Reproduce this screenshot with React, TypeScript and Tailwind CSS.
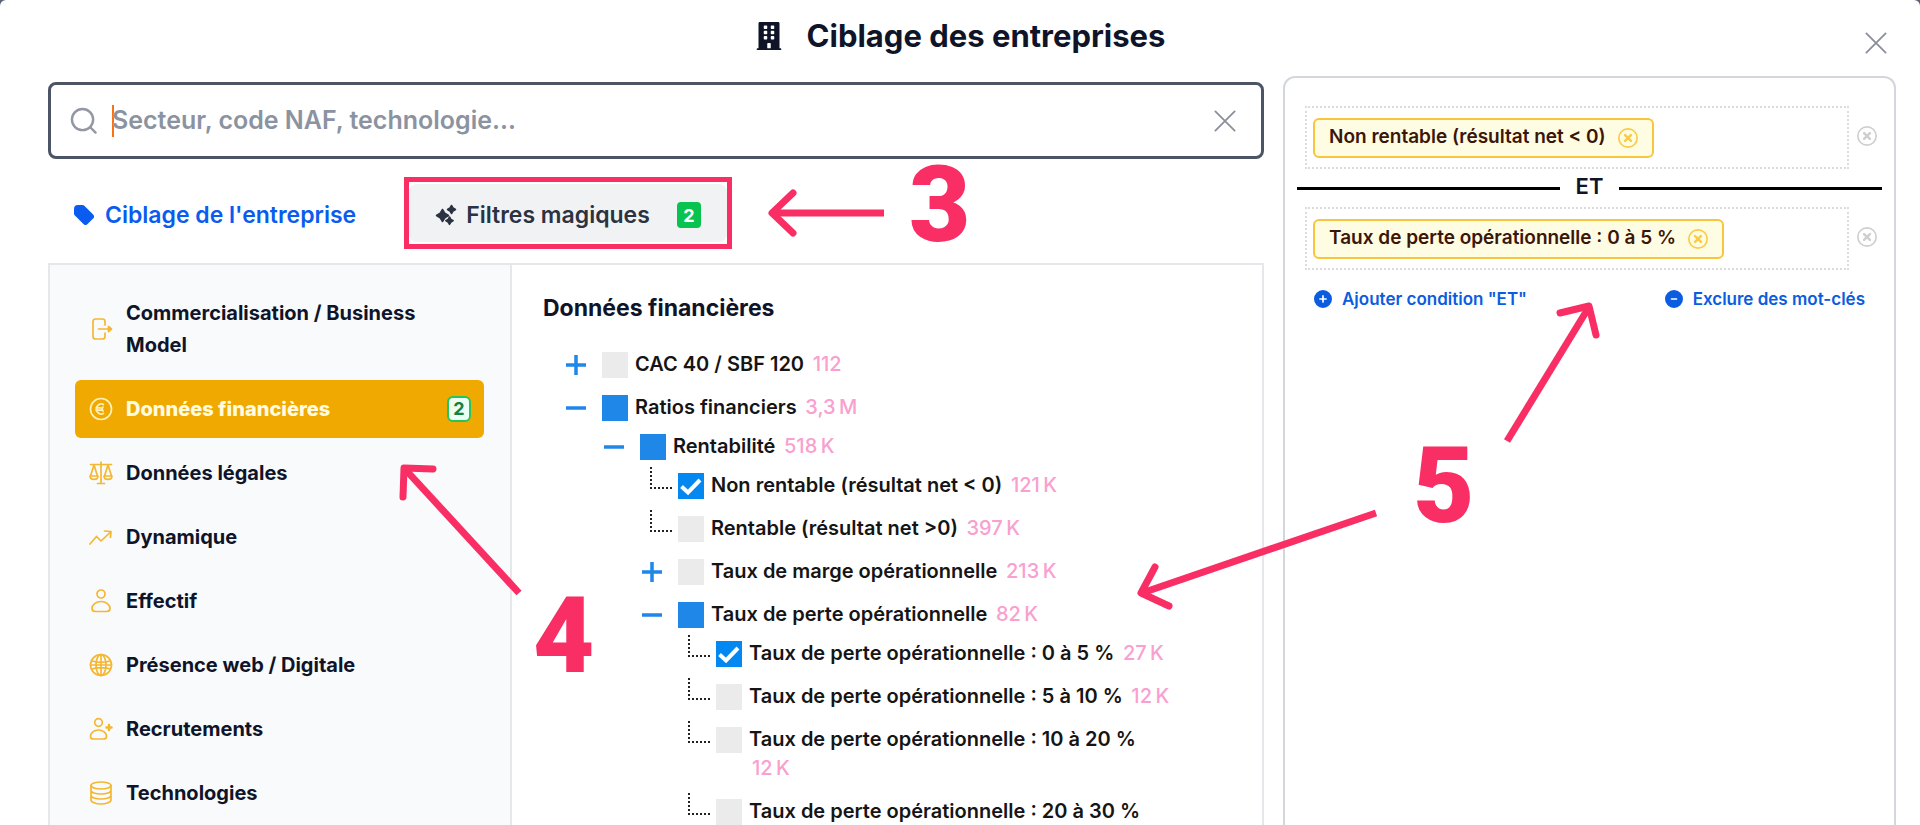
import React from "react";
import { FaBuilding } from "react-icons/fa";
import { FaCirclePlus, FaCircleMinus } from "react-icons/fa6";

const strokeProps = {
  fill: "none",
  stroke: "currentColor",
  strokeWidth: 1.7,
  strokeLinecap: "round" as const,
  strokeLinejoin: "round" as const,
  viewBox: "0 0 24 24",
  "aria-hidden": true,
};

const icons = {
  exit: (
    <svg {...strokeProps} className="size-6">
      <path d="M16 8V4.500a2.500 2.500 0 0 0-2.500-2.500H6.500A2.500 2.500 0 0 0 4 4.500v15A2.500 2.500 0 0 0 6.500 22h7a2.500 2.500 0 0 0 2.500-2.500V16M9.500 12h12" />
      <path d="m19.500 9.500 3 2.500-3 2.500z" fill="currentColor" />
    </svg>
  ),
  euro: (
    <svg {...strokeProps} className="size-6">
      <circle cx="12" cy="12" r="10.500" />
      <path d="M14.500 7.500a5 5 0 1 0 0 9M14 10a3 3 0 0 0 0 4M7 10.800h5M7 13.200h5" />
    </svg>
  ),
  scales: (
    <svg {...strokeProps} className="size-6">
      <path d="M12 1v21M8.500 22.500h7M1.500 3.500h21M5 4 1.500 15M5 4l3.500 11M19 4l-3.500 11M19 4l3.500 11M1 15c0 4.500 8 4.500 8 0zM15 15c0 4.500 8 4.500 8 0z" />
    </svg>
  ),
  trend: (
    <svg {...strokeProps} className="size-6">
      <path d="m1 19 6.500-7.500 4.500 4.500L21 7.500M15.500 6l6.500.500-.500 6" />
    </svg>
  ),
  person: (
    <svg {...strokeProps} className="size-6">
      <circle cx="12" cy="5" r="4" />
      <path d="M12 12.500c-5 0-9 3.500-9 7 0 2 1.500 3 3.500 3h11c2 0 3.500-1 3.500-3 0-3.500-4-7-9-7z" />
    </svg>
  ),
  globe: (
    <svg {...strokeProps} className="size-6">
      <circle cx="12" cy="12" r="10.500" />
      <ellipse cx="12" cy="12" rx="5" ry="10.500" />
      <path d="M12 1.500v21M3 8c5 1.500 13 1.500 18 0M3 16c5-1.500 13-1.500 18 0M1.500 12h21" />
    </svg>
  ),
  recruit: (
    <svg {...strokeProps} className="size-6">
      <circle cx="9.500" cy="5.500" r="3.800" />
      <path d="M9.500 13c-4.500 0-8 3-8 6.500 0 2 1.500 2.500 3 2.500h10c1.500 0 3-.500 3-2.500 0-3.500-3.500-6.500-8-6.500z" />
      <path d="M20 8v5M17.500 10.500h5" strokeWidth="2.500" />
    </svg>
  ),
  database: (
    <svg {...strokeProps} className="size-6">
      <ellipse cx="12" cy="4.500" rx="10" ry="3.500" />
      <path d="M2 4.500v14.500c0 2 4.500 4 10 4s10-2 10-4V4.500M2 9.500c0 2 4.500 3.500 10 3.500s10-1.500 10-3.500M2 14.500c0 2 4.500 3.500 10 3.500s10-1.500 10-3.500" />
    </svg>
  ),
};

type Category = { label: string; icon: React.ReactNode; count?: number };

const categories: Category[] = [
  { label: "Commercialisation / Business Model", icon: icons.exit },
  { label: "Données financières", icon: icons.euro, count: 2 },
  { label: "Données légales", icon: icons.scales },
  { label: "Dynamique", icon: icons.trend },
  { label: "Effectif", icon: icons.person },
  { label: "Présence web / Digitale", icon: icons.globe },
  { label: "Recrutements", icon: icons.recruit },
  { label: "Technologies", icon: icons.database },
];

type TreeNode = {
  label: string;
  count?: string;
  state: "off" | "partial" | "on";
  toggle?: "plus" | "minus";
  children?: TreeNode[];
};

const tree: TreeNode[] = [
  { label: "CAC 40 / SBF 120", count: "112", state: "off", toggle: "plus" },
  {
    label: "Ratios financiers",
    count: "3,3\u202fM",
    state: "partial",
    toggle: "minus",
    children: [
      {
        label: "Rentabilité",
        count: "518\u202fK",
        state: "partial",
        toggle: "minus",
        children: [
          { label: "Non rentable (résultat net < 0)", count: "121\u202fK", state: "on" },
          { label: "Rentable (résultat net >0)", count: "397\u202fK", state: "off" },
          { label: "Taux de marge opérationnelle", count: "213\u202fK", state: "off", toggle: "plus" },
          {
            label: "Taux de perte opérationnelle",
            count: "82\u202fK",
            state: "partial",
            toggle: "minus",
            children: [
              { label: "Taux de perte opérationnelle : 0 à 5 %", count: "27\u202fK", state: "on" },
              { label: "Taux de perte opérationnelle : 5 à 10 %", count: "12\u202fK", state: "off" },
              { label: "Taux de perte opérationnelle : 10 à 20 %", count: "12\u202fK", state: "off" },
              { label: "Taux de perte opérationnelle : 20 à 30 %", state: "off" },
            ],
          },
        ],
      },
    ],
  },
];

function Cross({ className }: { className: string }) {
  return (
    <svg {...strokeProps} strokeWidth={2} className={className}>
      <path d="M1.500 1.500l21 21M22.500 1.500l-21 21" />
    </svg>
  );
}

function CircleCross() {
  return (
    <svg {...strokeProps} strokeWidth={2} className="size-5">
      <circle cx="12" cy="12" r="11" />
      <path d="m8.500 8.500 7 7M15.500 8.500l-7 7" strokeWidth={3} />
    </svg>
  );
}

function Checkbox({ id, state }: { id: string; state: TreeNode["state"] }) {
  return (
    <span className="grid size-[26px] shrink-0 place-items-center">
      <input
        id={id}
        type="checkbox"
        defaultChecked={state === "on"}
        className={
          "col-start-1 row-start-1 size-[26px] appearance-none " +
          (state === "off" ? "bg-[#ebebeb]" : state === "on" ? "bg-[#0387f0]" : "bg-[#1f87e8]")
        }
      />
      {state === "on" && (
        <svg viewBox="0 0 26 26" className="pointer-events-none col-start-1 row-start-1 size-[26px]" fill="none" stroke="white" strokeWidth="4" aria-hidden>
          <path d="m3.500 13.500 6.500 6L22 7" />
        </svg>
      )}
    </span>
  );
}

function Branch({ nodes, path }: { nodes: TreeNode[]; path: string }) {
  return (
    <ul className="flex flex-col gap-[14px]">
      {nodes.map((node, i) => {
        const id = `${path}-${i}`;
        return (
          <li key={id} className="flex flex-col gap-[10px]">
            <div className="flex items-start">
              <div className="flex h-[29px] w-[38px] shrink-0 items-center">
                {node.toggle ? (
                  <button type="button" aria-label={node.toggle === "plus" ? "Déplier" : "Replier"} className="text-[#1f87e8]">
                    <svg viewBox="0 0 20 20" className="ml-[2px] size-5" stroke="currentColor" strokeWidth="3.500" aria-hidden>
                      <path d={node.toggle === "plus" ? "M0 10h20M10 0v20" : "M0 10h20"} />
                    </svg>
                  </button>
                ) : (
                  <span className="-mt-1 ml-[10px] size-[22px] self-start border-b-2 border-l-2 border-dotted border-[#222]" />
                )}
              </div>
              <div className="flex h-[29px] items-center">
                <Checkbox id={id} state={node.state} />
              </div>
              <div className="ml-[7px] min-w-0 flex-1 text-[20px] leading-[29px]">
                <label htmlFor={id} className="font-semibold text-[#151515]">
                  {node.label}
                </label>
                {node.count && (
                  <>
                    {" "}
                    <span className="inline-block pl-[3px] font-medium text-[#f9a0cf]">{node.count}</span>
                  </>
                )}
              </div>
            </div>
            {node.children && (
              <div className="pl-[38px]">
                <Branch nodes={node.children} path={id} />
              </div>
            )}
          </li>
        );
      })}
    </ul>
  );
}

function Condition({ label }: { label: string }) {
  return (
    <div className="flex items-center gap-2 pr-[5px] pl-2">
      <div className="flex h-[63px] flex-1 items-center border-2 border-dotted border-[#dcdcdc] px-[6px]">
        <span className="flex h-10 items-center gap-3 rounded-md border-2 border-[#f8c63c] bg-[#fefce3] px-[14px] text-[19px] font-semibold text-[#3b1608]">
          {label}
          <button type="button" aria-label="Retirer le filtre" className="text-[#fccb45]">
            <CircleCross />
          </button>
        </span>
      </div>
      <button type="button" aria-label="Supprimer la condition" className="mb-1 text-[#cfcfcf]">
        <CircleCross />
      </button>
    </div>
  );
}

function Annotations() {
  return (
    <div className="pointer-events-none absolute inset-0 font-[Roboto,sans-serif] text-[106px] leading-[112px] font-black text-[#f92e64]">
      <svg viewBox="0 0 1920 825" width="1920" height="825" className="absolute top-0 left-0" fill="none" stroke="#f92e64" strokeWidth="7" strokeLinejoin="round" aria-hidden>
        <path d="M884 213H772" />
        <path d="m793 193-21 20 21 20" strokeLinecap="round" />
        <path d="M519 593 404 468" />
        <path d="M403 497l1-29 29 1" strokeLinecap="round" />
        <path d="m1507 441 82-134" />
        <path d="m1560 313 29-7 7 29" strokeLinecap="round" />
        <path d="m1376 513-234 80" />
        <path d="m1155 567-14 26 28 13" strokeLinecap="round" />
      </svg>
      <span className="absolute top-[149px] left-[909px]">3</span>
      <span className="absolute top-[580px] left-[533px]">4</span>
      <span className="absolute top-[430px] left-[1413px]">5</span>
    </div>
  );
}

export default function App() {
  return (
    <div className="relative h-screen overflow-hidden bg-[#5b6472] font-[Inter,sans-serif] text-[#0f1428]">
      <main className="flex h-full flex-col rounded-t-md bg-white">
        <header className="flex h-[76px] shrink-0 items-center">
          <h1 className="flex flex-1 items-center justify-center gap-6 pb-1 text-[31px] font-bold">
            <FaBuilding className="size-7" aria-hidden />
            Ciblage des entreprises
          </h1>
          <button type="button" aria-label="Fermer" className="mt-[10px] mr-[33px] -ml-[55px] text-[#8b8f9c]">
            <Cross className="size-[22px]" />
          </button>
        </header>
        <div className="flex min-h-0 flex-1 gap-[19px] pr-6 pl-12">
          <section className="flex min-w-0 flex-1 flex-col pt-[6px]">
            <div className="flex h-[77px] shrink-0 items-center gap-[15px] rounded-lg border-3 border-[#4b5565] pr-[25px] pl-[19px]">
              <svg viewBox="0 0 28 28" className="size-[27px] shrink-0 text-[#9297a3]" fill="none" stroke="currentColor" strokeWidth="2.500" strokeLinecap="round" aria-hidden>
                <circle cx="13" cy="13" r="11" />
                <path d="m21 21 5.500 5.500" />
              </svg>
              <div className="flex min-w-0 flex-1 items-center">
                <span className="h-8 w-[2px] bg-[#f97316]" />
                <input aria-label="Recherche" placeholder="Secteur, code NAF, technologie..." className="-ml-[2px] min-w-0 flex-1 text-[25px] font-semibold outline-none placeholder:text-[#8b93a1]" />
              </div>
              <button type="button" aria-label="Effacer" className="text-[#8b8f9c]">
                <Cross className="size-[22px]" />
              </button>
            </div>
            <div className="flex h-[104px] shrink-0 items-center pt-1 pl-[26px]">
              <button type="button" className="flex items-center gap-[11px] pt-1 text-[23px] font-semibold text-[#0a5cf0]">
                <svg viewBox="0 0 20 20" className="size-5" fill="currentColor" aria-hidden>
                  <path d="M0 4a4 4 0 0 1 4-4h4.500a3 3 0 0 1 2.100.9l8.500 8.500a3 3 0 0 1 0 4.200l-5.500 5.500a3 3 0 0 1-4.200 0L.9 10.600A3 3 0 0 1 0 8.500z" />
                </svg>
                Ciblage de l'entreprise
              </button>
              <div className="ml-12 border-5 border-[#f92e64] py-[2px]">
                <button type="button" className="flex h-[58px] items-center rounded-lg bg-[#f1f2f4] px-[26px] pt-1 text-[23px] font-semibold text-[#2b3242]">
                  <svg viewBox="0 0 22 22" className="mr-[9px] size-[22px]" fill="currentColor" stroke="currentColor" strokeWidth="1.500" strokeLinejoin="round" aria-hidden>
                    <path d="m7.500 5.500 2.300 3.700L13.500 11.500l-3.700 2.300L7.500 17.500l-2.300-3.700L1.500 11.500l3.700-2.300zM16.500 1.500l1.500 2.500L20.500 5.500l-2.500 1.500L16.500 9.500l-1.500-2.500L12.500 5.500l2.500-1.500zM14.500 13l1.400 2.300 2.300 1.400-2.300 1.400-1.400 2.300-1.400-2.300-2.300-1.400 2.300-1.400z" />
                  </svg>
                  Filtres magiques
                  <span className="ml-[27px] flex h-[26px] w-6 items-center justify-center rounded bg-[#08c34f] text-[18px] font-bold text-white">2</span>
                </button>
              </div>
            </div>
            <div className="flex min-h-0 flex-1 border-2 border-b-0 border-[#e5e7ea]">
              <nav className="w-[462px] shrink-0 overflow-hidden border-r-2 border-[#e5e7ea] bg-[#f8fafc] pt-[19px] pr-[26px] pl-[25px]">
                <ul className="flex flex-col gap-[6px]">
                  {categories.map((c) => (
                    <li key={c.label}>
                      <button
                        type="button"
                        className={
                          "flex w-full items-center gap-[13px] rounded-md py-[13px] pr-[13px] pl-[14px] text-left text-[20px] leading-8 " +
                          (c.count ? "bg-[#f0a900] font-extrabold text-[#fffbe0]" : "font-bold")
                        }
                      >
                        <span className={c.count ? "text-[#fff0b8]" : "text-[#f5b731]"}>{c.icon}</span>
                        <span className="flex-1">{c.label}</span>
                        {c.count && (
                          <span className="flex h-[26px] w-6 items-center justify-center rounded-md border-2 border-[#22c55e] bg-[#ecfdf3] text-[18px] font-bold text-[#15803d]">{c.count}</span>
                        )}
                      </button>
                    </li>
                  ))}
                </ul>
              </nav>
              <div className="min-w-0 flex-1 overflow-hidden pt-[27px] pr-[86px] pl-[31px]">
                <h2 className="text-[23px] leading-8 font-bold">Données financières</h2>
                <div className="mt-[26px] pl-[21px]">
                  <Branch nodes={tree} path="filtre" />
                </div>
              </div>
            </div>
          </section>
          <aside className="w-[613px] shrink-0 rounded-t-xl border-2 border-b-0 border-[#d3d7dd] px-3 pt-7">
            <Condition label="Non rentable (résultat net < 0)" />
            <div className="flex h-[38px] items-center gap-4 pb-1 text-[22px] leading-8 font-semibold">
              <span className="mt-1 h-[3px] flex-1 bg-black" />
              ET
              <span className="mt-1 h-[3px] flex-1 bg-black" />
            </div>
            <Condition label="Taux de perte opérationnelle : 0 à 5 %" />
            <div className="flex items-center justify-between px-[17px] pt-[15px] text-[17px] leading-7 font-semibold text-[#0a5ce0]">
              <button type="button" className="flex items-center gap-[10px]">
                <FaCirclePlus className="size-[18px]" aria-hidden />
                Ajouter condition "ET"
              </button>
              <button type="button" className="flex items-center gap-[10px]">
                <FaCircleMinus className="size-[18px]" aria-hidden />
                Exclure des mot-clés
              </button>
            </div>
          </aside>
        </div>
      </main>
      <Annotations />
    </div>
  );
}
